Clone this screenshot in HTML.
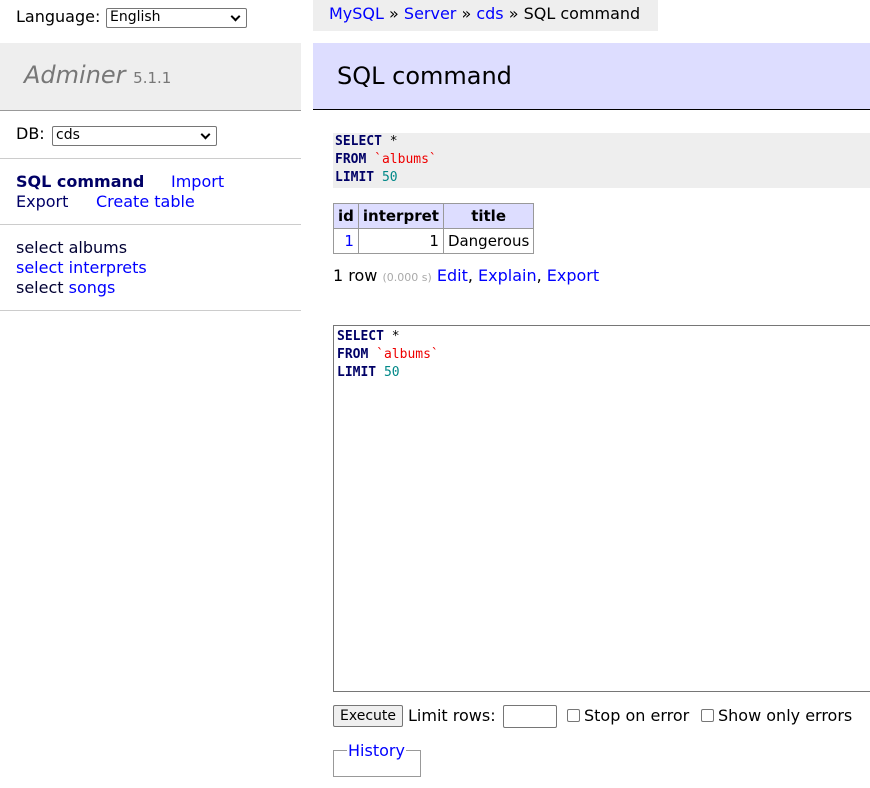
<!DOCTYPE html>
<html><head><style>
body{margin:0;width:870px;height:788px;overflow:hidden;font-family:"DejaVu Sans","Liberation Sans",sans-serif;font-size:16px;color:#000;background:#fff;position:relative}
.a{position:absolute;white-space:nowrap}
a{color:#00f;text-decoration:none}
.sel{position:absolute;border:1px solid #767676;border-radius:2px;font-size:14px;background:#fff;box-sizing:border-box;padding-left:3px;line-height:17px}
.sel:after{content:"";position:absolute;right:7px;top:4px;width:5px;height:5px;border-right:2px solid #000;border-bottom:2px solid #000;transform:rotate(45deg)}
.code{font-family:"DejaVu Sans Mono","Liberation Mono",monospace;font-size:13px;line-height:18px}
.k{font-weight:bold;color:#000066}
.s{color:#e00}.n{color:#088}
table{border-collapse:collapse;position:absolute;font-size:15px}
td,th{border:1px solid #999;padding:2px 4px;height:20px}
th{background:#ddf}
.cb{display:inline-block;width:11px;height:11px;border:1px solid #767676;border-radius:2px;vertical-align:-1px;margin-right:4px}
</style></head><body>
<div class="a" style="left:16px;top:7px">Language:</div>
<div class="sel" style="left:106px;top:8px;width:141px;height:20px">English</div>
<div class="a" style="left:0;top:43px;width:301px;height:67px;background:#eee;border-bottom:1px solid #999"></div>
<div class="a" style="left:24px;top:61px;font-size:24px;font-style:italic;color:#777">Adminer <span style="font-size:15px;font-style:normal">5.1.1</span></div>
<div class="a" style="left:16px;top:124px">DB:</div>
<div class="sel" style="left:52px;top:126px;width:165px;height:20px">cds</div>
<div class="a" style="left:0;top:158px;width:301px;border-top:1px solid #ccc"></div>
<div class="a" style="left:16px;top:172px;font-weight:bold;color:#000066">SQL command</div>
<div class="a" style="left:171px;top:172px"><a>Import</a></div>
<div class="a" style="left:16px;top:192px;color:#000066">Export</div>
<div class="a" style="left:96px;top:192px"><a>Create table</a></div>
<div class="a" style="left:0;top:224px;width:301px;border-top:1px solid #ccc"></div>
<div class="a" style="left:16px;top:238px;line-height:20px;color:#000033">select albums<br><a>select interprets</a><br>select <a>songs</a></div>
<div class="a" style="left:0;top:310px;width:301px;border-top:1px solid #ccc"></div>

<div class="a" style="left:313px;top:0;width:345px;height:31px;background:#eee"></div>
<div class="a" style="left:329px;top:4px"><a>MySQL</a> » <a>Server</a> » <a>cds</a> » SQL command</div>
<div class="a" style="left:313px;top:43px;width:557px;height:66px;background:#ddf;border-bottom:1px solid #000"></div>
<div class="a" style="left:337px;top:62px;font-size:24px">SQL command</div>
<div class="a code" style="left:333px;top:133px;width:537px;height:55px;background:#eee;padding-left:2px;box-sizing:border-box"><span class="k">SELECT</span> *<br><span class="k">FROM</span> <span class="s">`albums`</span><br><span class="k">LIMIT</span> <span class="n">50</span></div>
<table style="left:333px;top:203px"><tr><th>id</th><th>interpret</th><th>title</th></tr><tr><td style="text-align:right"><a>1</a></td><td style="text-align:right">1</td><td>Dangerous</td></tr></table>
<div class="a" style="left:333px;top:266px">1 row <span style="font-size:11px;color:#aaa">(0.000 s)</span> <a>Edit</a>, <a>Explain</a>, <a>Export</a></div>
<div class="a" style="left:333px;top:325px;width:545px;height:367px;border:1px solid #767676;box-sizing:border-box"></div>
<div class="a code" style="left:337px;top:328px"><span class="k">SELECT</span> *<br><span class="k">FROM</span> <span class="s">`albums`</span><br><span class="k">LIMIT</span> <span class="n">50</span></div>
<div class="a" style="left:333px;top:705px;width:70px;height:22px;border:1px solid #767676;border-radius:2px;background:#efefef;box-sizing:border-box;font-size:14px;text-align:center;line-height:20px">Execute</div>
<div class="a" style="left:408px;top:706px">Limit rows:</div>
<div class="a" style="left:503px;top:705px;width:54px;height:23px;border:1px solid #767676;border-radius:2px;box-sizing:border-box"></div>
<div class="a" style="left:567px;top:706px"><span class="cb"></span>Stop on error</div>
<div class="a" style="left:701px;top:706px"><span class="cb"></span>Show only errors</div>
<div class="a" style="left:333px;top:750px;width:88px;height:27px;border:1px solid #999;border-top:none;box-sizing:border-box"></div>
<div class="a" style="left:333px;top:750px;width:14px;border-top:1px solid #999"></div>
<div class="a" style="left:406px;top:750px;width:15px;border-top:1px solid #999"></div>
<div class="a" style="left:348px;top:741px"><a>History</a></div>
</body></html>
